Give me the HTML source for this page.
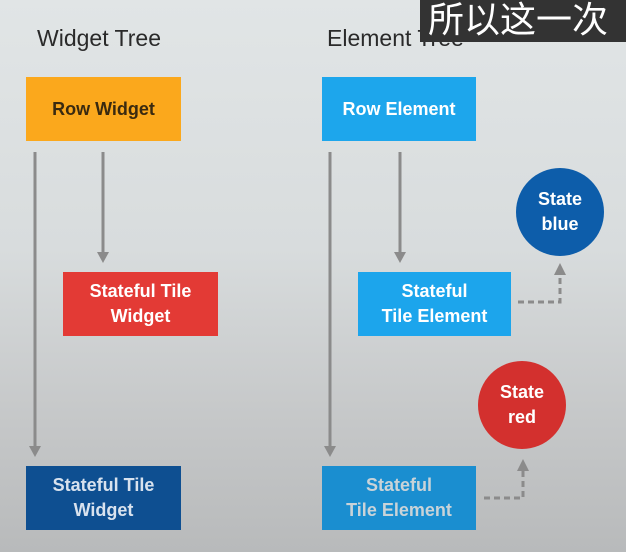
<!DOCTYPE html>
<html><head><style>
body{margin:0;width:626px;height:552px;overflow:hidden;background:linear-gradient(180deg,#e1e5e6 0%,#d8dcdd 45%,#c6c8c9 75%,#b8babb 100%);font-family:"Liberation Sans",sans-serif;position:relative}
.t{position:absolute;font-size:23px;color:#2a2a2a}
.b{position:absolute;display:flex;align-items:center;justify-content:center;text-align:center;font-weight:bold;font-size:18px;line-height:25px;color:#fff}
.c{position:absolute;border-radius:50%;display:flex;align-items:center;justify-content:center;text-align:center;font-weight:bold;font-size:18px;line-height:25px;color:#fff;width:88px;height:88px;box-sizing:border-box}
svg{position:absolute;left:0;top:0}
</style></head><body>
<div class="t" style="left:37px;top:25px">Widget Tree</div>
<div class="t" style="left:327px;top:25px">Element Tree</div>
<div style="position:absolute;left:420px;top:0;width:206px;height:42px;background:#333;color:#fff;font-family:'Liberation Sans','Noto Sans CJK SC',sans-serif;font-size:36px;line-height:40px;padding-left:8px;box-sizing:border-box">所以这一次</div>
<svg width="626" height="552">
<g stroke="#8b8b8b" stroke-width="3" fill="#8b8b8b">
<line x1="35" y1="152" x2="35" y2="448"/><polygon points="29,446 41,446 35,457" stroke="none"/>
<line x1="103" y1="152" x2="103" y2="254"/><polygon points="97,252 109,252 103,263" stroke="none"/>
<line x1="330" y1="152" x2="330" y2="448"/><polygon points="324,446 336,446 330,457" stroke="none"/>
<line x1="400" y1="152" x2="400" y2="254"/><polygon points="394,252 406,252 400,263" stroke="none"/>
<polyline points="518,302 560,302 560,274" fill="none" stroke-dasharray="6,4"/><polygon points="554,275 566,275 560,263" stroke="none"/>
<polyline points="484,498 523,498 523,470" fill="none" stroke-dasharray="6,4"/><polygon points="517,471 529,471 523,459" stroke="none"/>
</g></svg>
<div class="b" style="left:26px;top:77px;width:155px;height:64px;background:#fba81c;color:#3a2a10">Row Widget</div>
<div class="b" style="left:322px;top:77px;width:154px;height:64px;background:#1da6ec">Row Element</div>
<div class="b" style="left:63px;top:272px;width:155px;height:64px;background:#e33a35">Stateful Tile<br>Widget</div>
<div class="b" style="left:358px;top:272px;width:153px;height:64px;background:#1ca5ec">Stateful<br>Tile Element</div>
<div class="b" style="left:26px;top:466px;width:155px;height:64px;background:#0e4f91;color:#d8e2ee">Stateful Tile<br>Widget</div>
<div class="b" style="left:322px;top:466px;width:154px;height:64px;background:#1a8ed0;color:#c9d3d8">Stateful<br>Tile Element</div>
<div class="c" style="left:516px;top:168px;background:#0d5daa">State<br>blue</div>
<div class="c" style="left:478px;top:361px;background:#d3302e">State<br>red</div>
</body></html>
